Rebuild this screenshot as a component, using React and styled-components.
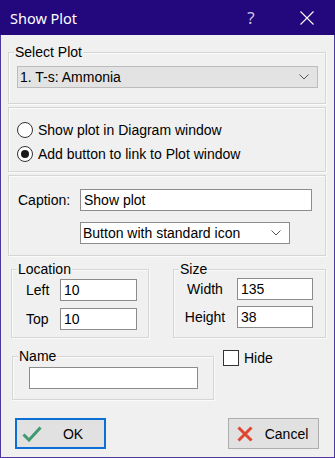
import React from 'react';
import styled, { createGlobalStyle } from 'styled-components';

const Global = createGlobalStyle`
  html, body { margin: 0; padding: 0; background: #f0f0f0; }
  body {
    font-family: "Liberation Sans", Arial, sans-serif;
    font-size: 14px;
    line-height: 16px;
    color: #000;
  }
  * { box-sizing: border-box; }
`;

const Window = styled.div`
  width: 335px;
  height: 458px;
  display: flex;
  flex-direction: column;
  background: #f0f0f0;
  border: 1px solid #4f3a9c;
  border-top: none;
`;

const TitleBar = styled.div`
  height: 35px;
  margin: 0 -1px;
  background: #22087c;
  display: flex;
  align-items: center;
  color: #fff;
  flex-shrink: 0;
`;

const TitleText = styled.div`
  flex: 1;
  padding-left: 10px;
  font-family: "Noto Sans", "Open Sans", sans-serif;
  font-size: 14.5px;
  line-height: 20px;
`;

const TitleButton = styled.div`
  width: 46px;
  height: 35px;
  display: flex;
  align-items: center;
  justify-content: center;
  margin-right: ${p => p.$mr || 0}px;
  color: ${p => p.$color || '#fff'};
  font-family: "Noto Sans", "Open Sans", sans-serif;
  font-size: 17px;
`;

const TitleButtons = styled.div`
  display: flex;
  padding-right: 5px;
`;

const Body = styled.div`
  flex: 1;
  display: flex;
  flex-direction: column;
  padding: 0 8px 0 7px;
`;

const Group = styled.div`
  position: relative;
  border: 1px solid #d5d5d5;
  box-shadow: inset 1px 1px 0 #fbfbfb, 1px 1px 0 #fbfbfb;
  margin-top: ${p => p.$mt || 0}px;
  padding: ${p => p.$pad || '0'};
  ${p => (p.$w ? `width: ${p.$w}px;` : '')}
  ${p => (p.$h ? `height: ${p.$h}px;` : '')}
  ${p => (p.$ml ? `margin-left: ${p.$ml}px;` : '')}
  flex-shrink: 0;
`;

const Legend = styled.span`
  position: absolute;
  top: -9px;
  left: 5px;
  padding: 0 1px;
  background: #f0f0f0;
  line-height: 16px;
`;

const Combo = styled.div`
  height: 22px;
  width: ${p => (p.$w ? `${p.$w}px` : 'auto')};
  display: flex;
  align-items: center;
  justify-content: space-between;
  padding: 0 8px 0 2px;
  background: ${p => (p.$flat ? '#fff' : '#e3e3e3')};
  border: 1px solid ${p => (p.$flat ? '#8c8c8c' : '#bcbcbc')};
`;

const RadioRow = styled.label`
  height: 24px;
  display: flex;
  align-items: center;
  gap: 5px;
`;

const RadioCircle = styled.span`
  width: 16px;
  height: 16px;
  border-radius: 50%;
  border: 1px solid #333;
  background: #fff;
  display: flex;
  align-items: center;
  justify-content: center;
  &::after {
    content: '';
    width: 8px;
    height: 8px;
    border-radius: 50%;
    background: ${p => (p.$on ? '#1a1a1a' : 'transparent')};
  }
`;

const CaptionGrid = styled.div`
  display: grid;
  grid-template-columns: 62px 1fr;
  row-gap: 11px;
  align-items: center;
`;

const TextBox = styled.div`
  height: 22px;
  width: ${p => (p.$w ? `${p.$w}px` : 'auto')};
  background: #fff;
  border: 1px solid #8c8c8c;
  padding: 0 3px;
  display: flex;
  align-items: center;
`;

const FieldRow = styled.div`
  display: flex;
  margin-top: ${p => p.$mt || 0}px;
  padding-left: ${p => p.$pl || 0}px;
  align-items: ${p => p.$align || 'stretch'};
`;

const FormGrid = styled.div`
  display: grid;
  grid-template-columns: ${p => p.$cols};
  column-gap: ${p => p.$cg || 0}px;
  row-gap: ${p => p.$rg || 0}px;
  grid-auto-rows: 22px;
  align-items: center;
`;

const Label = styled.span`
  text-align: ${p => p.$align || 'left'};
`;

const HideWrap = styled.label`
  display: flex;
  align-items: center;
  gap: 5px;
  margin-left: 9px;
`;

const CheckBox = styled.span`
  width: 16px;
  height: 16px;
  border: 1px solid #333;
  background: #fff;
`;

const Buttons = styled.div`
  display: flex;
  justify-content: space-between;
  margin-top: 18px;
  padding: 0 7px;
`;

const Button = styled.div`
  width: 91px;
  height: 31px;
  display: flex;
  align-items: center;
  background: #e1e1e1;
  border: ${p => (p.$default ? '2px solid #0b6fd6' : '1px solid #adadad')};
  padding-left: ${p => (p.$default ? 3 : 4)}px;
`;

const ButtonIcon = styled.span`
  width: 24px;
  display: flex;
  align-items: center;
  justify-content: center;
`;

const ButtonLabel = styled.span`
  flex: 1;
  text-align: center;
  padding-right: 2px;
`;

const Chevron = () => (
  <svg width="10" height="6" viewBox="0 0 10 6">
    <path d="M0.5 0.5 L5 5 L9.5 0.5" fill="none" stroke="#555" strokeWidth="1" />
  </svg>
);

export default function App() {
  return (
    <>
      <Global />
      <Window>
        <TitleBar>
          <TitleText>Show Plot</TitleText>
          <TitleButtons>
            <TitleButton $color="#c9c4e0" $mr={10}>?</TitleButton>
            <TitleButton>
              <svg width="14" height="14" viewBox="0 0 14 14">
                <path d="M0.5 0.5 L13.5 13.5 M13.5 0.5 L0.5 13.5" stroke="#fff" strokeWidth="1.1" />
              </svg>
            </TitleButton>
          </TitleButtons>
        </TitleBar>
        <Body>
          <Group $mt={17} $pad="13px 7px 15px 8px">
            <Legend>Select Plot</Legend>
            <Combo>
              <span>1. T-s: Ammonia</span>
              <Chevron />
            </Combo>
          </Group>

          <Group $mt={3} $pad="10px 8px 5px 8px">
            <RadioRow>
              <RadioCircle />
              <span>Show plot in Diagram window</span>
            </RadioRow>
            <RadioRow>
              <RadioCircle $on />
              <span>Add button to link to Plot window</span>
            </RadioRow>
          </Group>

          <Group $mt={3} $pad="13px 13px 11px 9px">
            <CaptionGrid>
              <Label>Caption:</Label>
              <TextBox>Show plot</TextBox>
              <span />
              <Combo $flat $w={210}>
                <span>Button with standard icon</span>
                <Chevron />
              </Combo>
            </CaptionGrid>
          </Group>

          <FieldRow $mt={13} $pl={3}>
            <Group $w={138} $h={69} $pad="9px 0 0 14px">
              <Legend>Location</Legend>
              <FormGrid $cols="34px 77px" $rg={7}>
                <Label>Left</Label>
                <TextBox>10</TextBox>
                <Label>Top</Label>
                <TextBox>10</TextBox>
              </FormGrid>
            </Group>
            <Group $ml={24} $w={153} $h={69} $pad="8px 0 0 1px">
              <Legend>Size</Legend>
              <FormGrid $cols="60px 76px" $cg={2} $rg={6}>
                <Label $align="center">Width</Label>
                <TextBox>135</TextBox>
                <Label $align="center">Height</Label>
                <TextBox>38</TextBox>
              </FormGrid>
            </Group>
          </FieldRow>

          <FieldRow $mt={12} $pl={4} $align="flex-start">
            <Group $mt={6} $w={202} $h={44} $pad="10px 0 0 16px">
              <Legend>Name</Legend>
              <TextBox $w={169} />
            </Group>
            <HideWrap>
              <CheckBox />
              <span>Hide</span>
            </HideWrap>
          </FieldRow>

          <Buttons>
            <Button $default>
              <ButtonIcon>
                <svg width="20" height="16" viewBox="0 0 20 16">
                  <path d="M1.5 8.5 L7 14 L18.5 1.5" fill="none" stroke="#3f9a72" strokeWidth="3" />
                </svg>
              </ButtonIcon>
              <ButtonLabel>OK</ButtonLabel>
            </Button>
            <Button>
              <ButtonIcon>
                <svg width="16" height="16" viewBox="0 0 16 16">
                  <path d="M1.5 1.5 L14.5 14.5 M14.5 1.5 L1.5 14.5" stroke="#e0452f" strokeWidth="3" />
                </svg>
              </ButtonIcon>
              <ButtonLabel>Cancel</ButtonLabel>
            </Button>
          </Buttons>
        </Body>
      </Window>
    </>
  );
}
